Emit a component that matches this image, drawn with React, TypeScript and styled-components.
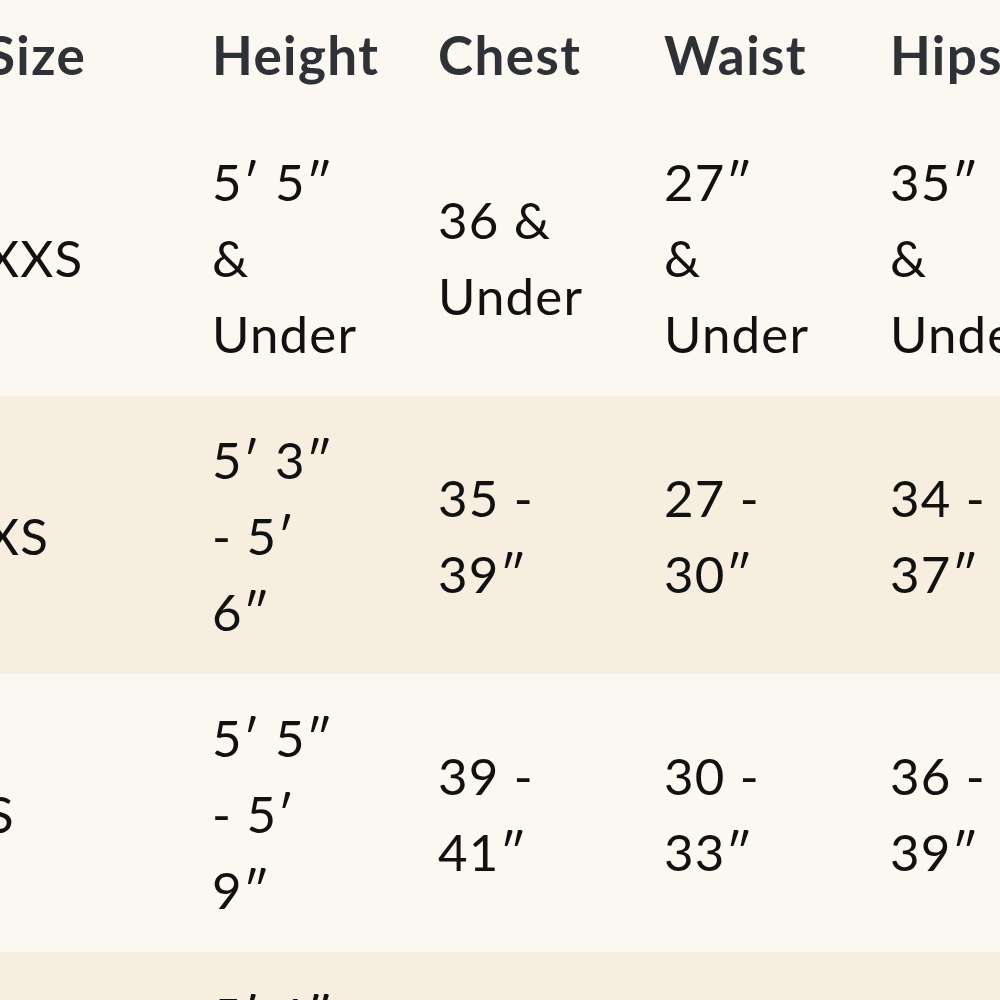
import React from "react";
import styled, { createGlobalStyle } from "styled-components";

const Global = createGlobalStyle`
  html, body { margin: 0; padding: 0; background: #fbf8f2; overflow: hidden; }
  body { font-family: Lato, "Noto Sans", sans-serif; }
`;

const Viewport = styled.div`
  width: 1000px;
  height: 1000px;
  overflow: hidden;
  background: #fbf8f2;
`;

const Table = styled.div`
  display: flex;
  flex-direction: column;
  margin-left: -14px;
  width: 1300px;
`;

const Row = styled.div<{ $alt?: boolean; $head?: boolean }>`
  display: grid;
  grid-template-columns: repeat(6, 226px);
  align-items: center;
  background: ${(p) => (p.$alt ? "#f8eee0" : "#fbf8f2")};
  height: ${(p) => (p.$head ? "118px" : "278px")};
  box-sizing: border-box;
  padding-bottom: ${(p) => (p.$head ? "8px" : "0")};
  flex-shrink: 0;
`;

const HeadCell = styled.div`
  font-size: 53px;
  font-weight: 700;
  color: #2e3136;
  line-height: 60px;
  letter-spacing: 1.4px;
  white-space: nowrap;
`;

const Cell = styled.div`
  font-size: 51px;
  font-weight: 400;
  color: #111;
  line-height: 76px;
  letter-spacing: 1.2px;
  display: flex;
  flex-direction: column;
  white-space: nowrap;
  padding-top: 2px;
`;

const headers = ["Size", "Height", "Chest", "Waist", "Hips"];

const rows: string[][][] = [
  [["XXS"], ["5′ 5″", "&", "Under"], ["36 &", "Under"], ["27″", "&", "Under"], ["35″", "&", "Under"]],
  [["XS"], ["5′ 3″", "- 5′", "6″"], ["35 -", "39″"], ["27 -", "30″"], ["34 -", "37″"]],
  [["S"], ["5′ 5″", "- 5′", "9″"], ["39 -", "41″"], ["30 -", "33″"], ["36 -", "39″"]],
  [["M"], ["5′ 4″", "- 5′", "9″"], ["41 -", "43″"], ["33 -", "35″"], ["39 -", "41″"]],
];

export default function App() {
  return (
    <Viewport>
      <Global />
      <Table>
        <Row $head>
          {headers.map((h) => (
            <HeadCell key={h}>{h}</HeadCell>
          ))}
        </Row>
        {rows.map((r, i) => (
          <Row key={i} $alt={i % 2 === 1}>
            {r.map((lines, j) => (
              <Cell key={j}>
                {lines.map((l, k) => (
                  <span key={k}>{l}</span>
                ))}
              </Cell>
            ))}
          </Row>
        ))}
      </Table>
    </Viewport>
  );
}
